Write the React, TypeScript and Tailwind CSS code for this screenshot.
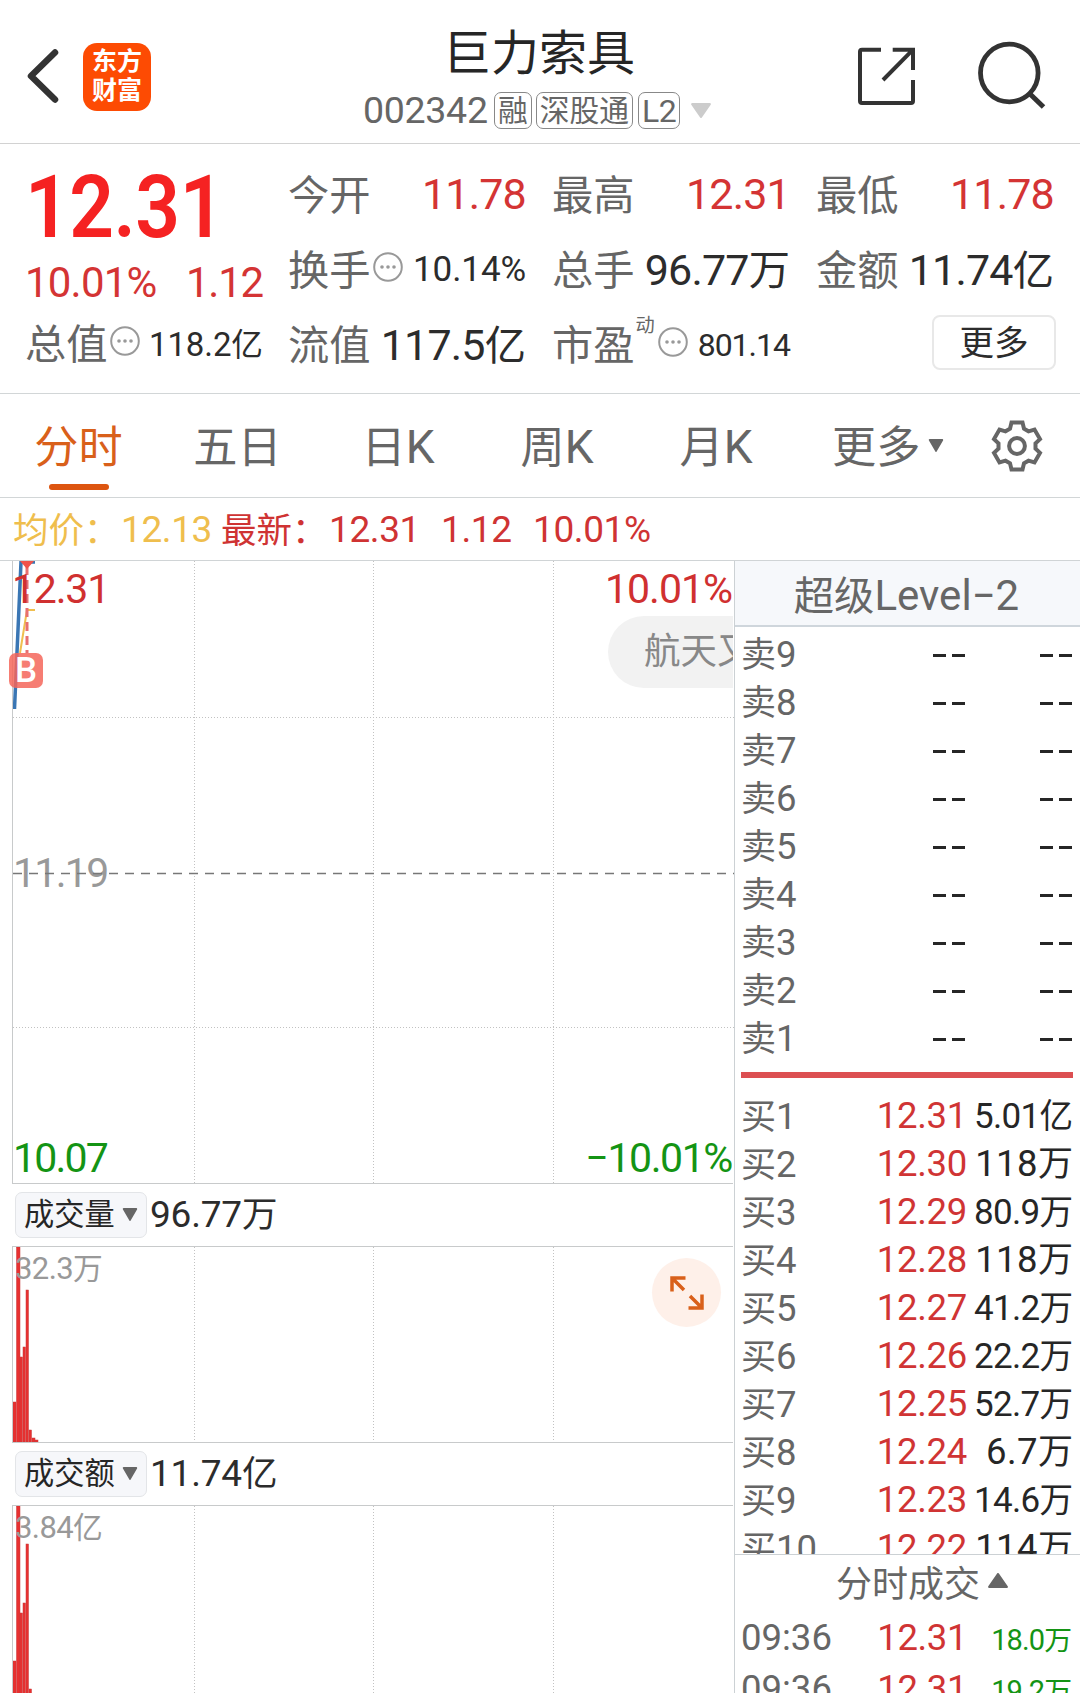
import React from "react";

/* Latin runs use Roboto, Chinese runs a slightly smaller Noto Sans CJK SC. */
function T({ children, className = "" }: { children: string; className?: string }) {
  const parts = children.split(/([\u2e80-\uffff]+)/).filter(Boolean);
  return (
    <span className={"whitespace-nowrap leading-none " + className}>
      {parts.map((p, i) =>
        /[\u2e80-\uffff]/.test(p) ? (
          <span key={i} className="font-['Noto_Sans_CJK_SC',sans-serif] text-[0.96em] tracking-normal">{p}</span>
        ) : (
          <span key={i}>{p}</span>
        )
      )}
    </span>
  );
}

function Dots({ className = "" }: { className?: string }) {
  return (
    <svg viewBox="0 0 30 30" className={"h-[30px] w-[30px] shrink-0 " + className}>
      <circle cx="15" cy="15" r="13.8" fill="none" stroke="#999" strokeWidth="2" />
      <circle cx="9" cy="15" r="1.8" fill="#999" />
      <circle cx="15" cy="15" r="1.8" fill="#999" />
      <circle cx="21" cy="15" r="1.8" fill="#999" />
    </svg>
  );
}

function Tri({ className = "" }: { className?: string }) {
  return (
    <svg viewBox="0 0 20 14" preserveAspectRatio="none" className={"shrink-0 " + className}>
      <path d="M2 1H18L10 13Z" fill="currentColor" stroke="currentColor" strokeWidth="2" strokeLinejoin="round" />
    </svg>
  );
}

function Header() {
  return (
    <header className="flex h-[144px] shrink-0 border-b border-[#d2d2d2]">
      <svg viewBox="0 0 40 64" className="ml-[24px] mt-[44px] h-[64px] w-[40px] shrink-0">
        <path d="M31 8.500L7 32L31 55.500" fill="none" stroke="#333" strokeWidth="6.500" strokeLinecap="round" strokeLinejoin="round" />
      </svg>
      <div className="ml-[19px] mt-[43px] flex h-[68px] w-[68px] shrink-0 flex-col items-center rounded-[14px] bg-[#fd4b03] pt-[2px] font-['Noto_Sans_CJK_SC',sans-serif] text-[25px] font-bold leading-[29px] text-white">
        <span>东方</span>
        <span>财富</span>
      </div>
      <div className="ml-[212px] flex w-[352px] shrink-0 flex-col">
        <div className="mt-[24px] flex h-[50px] items-center pl-[80px]">
          <span className="whitespace-nowrap font-['Noto_Sans_CJK_SC',sans-serif] text-[48px] leading-none text-[#262626]">巨力索具</span>
        </div>
        <div className="mt-[18px] flex h-[37px] items-center text-[#666]">
          <T className="w-[126px] text-[37.5px] tracking-[-0.3px]">002342</T>
          <div className="ml-[5px] flex h-[37px] w-[38px] items-center justify-center rounded-[7px] border border-[#888] pb-[2px]"><T className="text-[31px]">融</T></div>
          <div className="ml-[4px] flex h-[37px] w-[97px] items-center justify-center rounded-[7px] border border-[#888] pb-[2px]"><T className="text-[31px]">深股通</T></div>
          <div className="ml-[5px] flex h-[37px] w-[42px] items-center justify-center rounded-[7px] border border-[#888]"><T className="text-[32px] tracking-[-0.5px]">L2</T></div>
          <Tri className="ml-[10px] h-[15px] w-[22px] text-[#ccc]" />
        </div>
      </div>
      <svg viewBox="0 0 60 60" className="ml-[142px] mt-[47px] h-[60px] w-[60px] shrink-0" fill="none" stroke="#333" strokeWidth="4">
        <path d="M24 2.700H5Q3 2.700 3 4.700V54Q3 56 5 56H54Q56 56 56 54V33" />
        <path d="M35.700 2.700H56V23M55.500 3.200L26 33" />
      </svg>
      <svg viewBox="0 0 72 72" className="ml-[58px] mt-[40px] h-[72px] w-[72px] shrink-0" fill="none" stroke="#333" strokeWidth="4.800">
        <circle cx="34.300" cy="33" r="28.800" />
        <path d="M54 53L68.500 67" strokeWidth="5" />
      </svg>
    </header>
  );
}

function Stat({ label, value, tone, small, dots, sup }: { label: string; value: string; tone?: string; small?: string; dots?: boolean; sup?: string }) {
  return (
    <div className="flex h-[75px] w-[238px] items-center">
      <T className="text-[43px] text-[#666]">{label}</T>
      {sup && <T className="-mt-[40px] ml-[1px] text-[20px] text-[#666]">{sup}</T>}
      {dots && <Dots className={"mt-[-5px] " + (sup ? "ml-[3px]" : "ml-[2px]")} />}
      <T className={"ml-auto " + (small || "text-[43px] tracking-[-0.8px]") + " " + (tone || "text-[#2c2c2c]")}>{value}</T>
    </div>
  );
}

function Quote() {
  return (
    <section className="flex h-[250px] shrink-0 border-b border-[#d2d6d7]">
      <div className="ml-[25px] flex w-[238px] shrink-0 flex-col">
        <T className="mt-[20px] origin-left scale-x-[0.9] text-[87px] font-semibold leading-[90px] tracking-[-0.5px] text-[#f52222]">12.31</T>
        <div className="mt-[11px] flex h-[42px] items-center justify-between">
          <T className="text-[42px] tracking-[-0.8px] text-[#d43434]">10.01%</T>
          <T className="text-[42px] tracking-[-1.2px] text-[#d43434]">1.12</T>
        </div>
        <div className="mt-[2px]">
          <Stat label="总值" value="118.2亿" dots small="text-[33px] tracking-[-0.1px]" />
        </div>
      </div>
      <div className="ml-[25px] mt-[13px] grid h-[225px] w-[767px] shrink-0 grid-cols-[238px_238px_238px] gap-x-[26px]">
        <Stat label="今开" value="11.78" tone="text-[#d43434]" />
        <Stat label="最高" value="12.31" tone="text-[#d43434]" />
        <Stat label="最低" value="11.78" tone="text-[#d43434]" />
        <Stat label="换手" value="10.14%" dots small="text-[35px] tracking-[-0.1px]" />
        <Stat label="总手" value="96.77万" />
        <Stat label="金额" value="11.74亿" />
        <Stat label="流值" value="117.5亿" />
        <Stat label="市盈" value="801.14" sup="动" dots small="text-[32px] tracking-[-1px]" />
        <div className="flex h-[75px] items-center justify-end">
          <button className="-mr-[2px] mb-[4px] flex h-[55px] w-[124px] items-center justify-center rounded-[8px] border-2 border-[#e8e8e8] pb-[2px]"><T className="text-[36px] text-[#2c2c2c]">更多</T></button>
        </div>
      </div>
    </section>
  );
}

function Tabs() {
  return (
    <nav className="flex h-[104px] shrink-0 items-center border-b border-[#d2d6d7] text-[46px] text-[#666]">
      <div className="flex h-full w-[157px] flex-col items-center">
        <T className="mt-[28px] text-[#d9601a]">分时</T>
        <div className="mt-[14px] h-[6px] w-[60px] rounded-full bg-[#dd5510]" />
      </div>
      <div className="flex w-[161px] justify-center"><T>五日</T></div>
      <div className="flex w-[160px] justify-center"><T>日K</T></div>
      <div className="flex w-[158px] justify-center"><T>周K</T></div>
      <div className="flex w-[160px] justify-center"><T>月K</T></div>
      <div className="ml-[36px] flex items-center"><T>更多</T><Tri className="ml-[8px] h-[13px] w-[16px]" /></div>
      <svg viewBox="0 0 54 54" className="ml-[46px] h-[54px] w-[54px]" fill="none" stroke="#666" strokeWidth="4">
        <path d="M21.500 3.600L32.500 3.600L34 9.700L38.500 12.300L44.500 10.500L50 20.100L45.500 24.400L45.500 29.600L50 33.900L44.500 43.500L38.500 41.700L34 44.300L32.500 50.400L21.500 50.400L20 44.300L15.500 41.700L9.500 43.500L4 33.900L8.500 29.600L8.500 24.400L4 20.100L9.500 10.500L15.500 12.300L20 9.700Z" />
        <circle cx="27" cy="27" r="7.900" />
      </svg>
    </nav>
  );
}

function Info() {
  return (
    <div className="flex h-[63px] shrink-0 items-center border-b border-[#d0d4d6] text-[37px] tracking-[-0.4px] text-[#cf3333]">
      <T className="ml-[13px] w-[108px] text-[#efbe4d]">均价：</T>
      <T className="w-[100px] text-[#efbe4d]">12.13</T>
      <T className="w-[108px]">最新：</T>
      <T className="w-[112px]">12.31</T>
      <T className="w-[92px]">1.12</T>
      <T>10.01%</T>
    </div>
  );
}

function Grid({ height, rows }: { height: number; rows: number[] }) {
  return (
    <svg width="722" height={height} className="absolute left-0 top-0" stroke="#c2c2c2" strokeWidth="1" strokeDasharray="1 2">
      {[181.5, 360.5, 540.5].map((x) => <path key={x} d={"M" + x + " 0V" + height} />)}
      {rows.map((y) => <path key={y} d={"M0 " + y + "H722"} />)}
    </svg>
  );
}

function PriceChart() {
  return (
    <div className="relative ml-[12px] h-[623px] w-[721px] shrink-0 overflow-visible border-b border-l border-[#c8cacb] font-normal">
      <Grid height={622} rows={[156.5, 466.5]} />
      <T className="absolute left-0 top-[292px] text-[41px] tracking-[-1.7px] text-[#999]">11.19</T>
      <svg width="722" height="622" className="absolute left-0 top-0" fill="none">
        <path d="M0 312.500H721" stroke="#777" strokeWidth="1.500" strokeDasharray="9 7" />
        <path d="M1.500 148L8 1H22" stroke="#3a76b4" strokeWidth="3.500" />
        <path d="M7 92L14 49H22" stroke="#f0bf4f" strokeWidth="2" />
        <path d="M14 5V92" stroke="#e87070" strokeWidth="3" strokeDasharray="9 5" />
        <path d="M7 0H21L14 8Z" fill="#f0524a" />
      </svg>
      <T className="absolute -left-[1px] top-[8px] text-[41px] tracking-[-1.2px] text-[#d03030]">12.31</T>
      <T className="absolute right-[1px] top-[8px] text-[41px] tracking-[-1px] text-[#d03030]">10.01%</T>
      <T className="absolute left-0 top-[577px] text-[41px] tracking-[-1.8px] text-[#149414]">10.07</T>
      <T className="absolute right-[1px] top-[577px] text-[41px] tracking-[-1.4px] text-[#149414]">−10.01%</T>
      <div className="absolute -left-[4px] top-[92px] flex h-[35px] w-[34px] items-center justify-center rounded-[7px] bg-[#f4665a]/85 font-['Roboto'] text-[35px] font-medium leading-none text-white">B</div>
      <div className="absolute right-0 top-[55px] flex h-[72px] w-[125px] items-center overflow-hidden rounded-l-full bg-[#f2f2f2] pb-[4px] pl-[36px]">
        <T className="text-[38px] text-[#888]">航天又</T>
      </div>
    </div>
  );
}

function BarPanel({ title, value, max, bars }: { title: string; value: string; max: string; bars: number[][] }) {
  return (
    <>
      <div className="flex h-[62px] shrink-0 items-center pl-[15px]">
        <button className="flex h-[46px] w-[132px] items-center rounded-[7px] border border-[#e3e5e8] bg-[#f6f7fa] pb-[3px] pl-[8px]">
          <T className="text-[31.500px] text-[#262626]">{title}</T>
          <Tri className="ml-[7px] mt-[2px] h-[13px] w-[16px] text-[#666]" />
        </button>
        <T className="mb-[3px] ml-[3px] text-[37px] tracking-[-0.2px] text-[#2c2c2c]">{value}</T>
      </div>
      <div className="relative ml-[12px] h-[197px] w-[721px] shrink-0 border-b border-l border-t border-[#c8cacb]">
        <Grid height={195} rows={[]} />
        <svg width="60" height="195" className="absolute left-0 top-0">
          {bars.map(([x, w, y], i) => <rect key={i} x={x} y={y} width={w} height={195 - y} fill="#e83030" stroke="#c83a3a" strokeWidth="0.5" />)}
        </svg>
        <T className="absolute left-[2px] top-[5px] text-[31px] tracking-[-0.6px] text-[#999]">{max}</T>
      </div>
    </>
  );
}

function BookRow({ name, price, vol }: { name: string; price: string; vol: string }) {
  const short = vol.length < 5;
  return (
    <div className="flex h-[48px] shrink-0 items-center text-[36.500px]">
      <T className="text-[#666]">{name}</T>
      <T className="ml-auto pt-[1px] tracking-[-0.3px] text-[#d03434]">{price}</T>
      <div className="flex w-[106px] justify-end pb-[2px]">
        <T className={"text-[#262626] " + (short ? "text-[36.500px] tracking-[0.4px]" : "text-[35px] tracking-[-0.7px]")}>{vol}</T>
      </div>
    </div>
  );
}

function Dashes() {
  return (
    <div className="flex w-[32px] justify-between">
      <span className="h-[3px] w-[13px] bg-[#262626]" />
      <span className="h-[3px] w-[13px] bg-[#262626]" />
    </div>
  );
}

const buys = [["1", "12.31", "5.01亿"], ["2", "12.30", "118万"], ["3", "12.29", "80.9万"], ["4", "12.28", "118万"], ["5", "12.27", "41.2万"], ["6", "12.26", "22.2万"], ["7", "12.25", "52.7万"], ["8", "12.24", "6.7万"], ["9", "12.23", "14.6万"], ["10", "12.22", "114万"]];

function Book() {
  return (
    <aside className="flex w-[346px] shrink-0 flex-col border-l border-[#ccd1d4]">
      <div className="flex h-[66px] shrink-0 items-center justify-center border-b-2 border-[#cfd6dc] bg-[#f6f8fb] pr-[2px] pt-[3px]">
        <T className="text-[42px] text-[#666]">超级Level−2</T>
      </div>
      <div className="flex h-[927px] shrink-0 flex-col overflow-hidden pl-[6px] pr-[7px] pt-[3px]">
        {[9, 8, 7, 6, 5, 4, 3, 2, 1].map((n) => (
          <div key={n} className="flex h-[48px] shrink-0 items-center text-[36.500px] text-[#666]">
            <T>{"卖" + n}</T>
            <div className="ml-auto mr-[1px] flex w-[139px] justify-between pt-[2px]"><Dashes /><Dashes /></div>
          </div>
        ))}
        <div className="mb-[14px] mt-[10px] h-[6px] shrink-0 bg-[#dc4f52]" />
        {buys.map((b) => <BookRow key={b[0]} name={"买" + b[0]} price={b[1]} vol={b[2]} />)}
      </div>
      <div className="flex h-[59px] shrink-0 items-center border-t border-[#ccd1d4] pb-[2px] pl-[101px]">
        <T className="text-[37.500px] text-[#666]">分时成交</T>
        <Tri className="mb-[6px] ml-[7px] h-[15px] w-[22px] rotate-180 text-[#666]" />
      </div>
      {["18.0万", "19.2万"].map((v) => (
        <div key={v} className="flex h-[51px] shrink-0 items-center pl-[6px] pr-[8px] text-[36.500px]">
          <T className="text-[#666]">09:36</T>
          <T className="ml-auto tracking-[-0.4px] text-[#d03434]">12.31</T>
          <div className="flex w-[105px] justify-end pt-[3px]"><T className="text-[29px] tracking-[-0.9px] text-[#149414]">{v}</T></div>
        </div>
      ))}
    </aside>
  );
}

export default function App() {
  return (
    <div className="flex h-[1693px] w-[1080px] flex-col overflow-hidden bg-white font-['Roboto','Noto_Sans_CJK_SC',sans-serif]">
      <Header />
      <Quote />
      <Tabs />
      <Info />
      <main className="-mt-px flex h-[1133px] shrink-0 overflow-hidden pt-px">
        <div className="relative flex w-[734px] shrink-0 flex-col">
          <PriceChart />
          <BarPanel title="成交量" value="96.77万" max="32.3万" bars={[[0, 3, 155], [3.500, 3.500, 0], [7, 2.500, 110], [10, 2.500, 100], [13, 2.500, 43], [16, 2.500, 183], [19, 3, 191], [22, 3, 193]]} />
          <BarPanel title="成交额" value="11.74亿" max="3.84亿" bars={[[0, 3, 155], [3.500, 3.500, 0], [7, 2.500, 107], [10, 2.500, 97], [13, 2.500, 38], [16, 2.500, 183]]} />
          <button className="absolute left-[652px] top-[697px] flex h-[69px] w-[69px] items-center justify-center rounded-full bg-[#fef0e9]">
            <svg viewBox="0 0 36 36" className="h-[36px] w-[36px]" fill="none" stroke="#d9601a" strokeWidth="3.500">
              <path d="M16.500 3H3V16.500M3.500 3.500L15 15M19.500 33H33V19.500M32.500 32.500L21 21" />
            </svg>
          </button>
        </div>
        <Book />
      </main>
    </div>
  );
}
